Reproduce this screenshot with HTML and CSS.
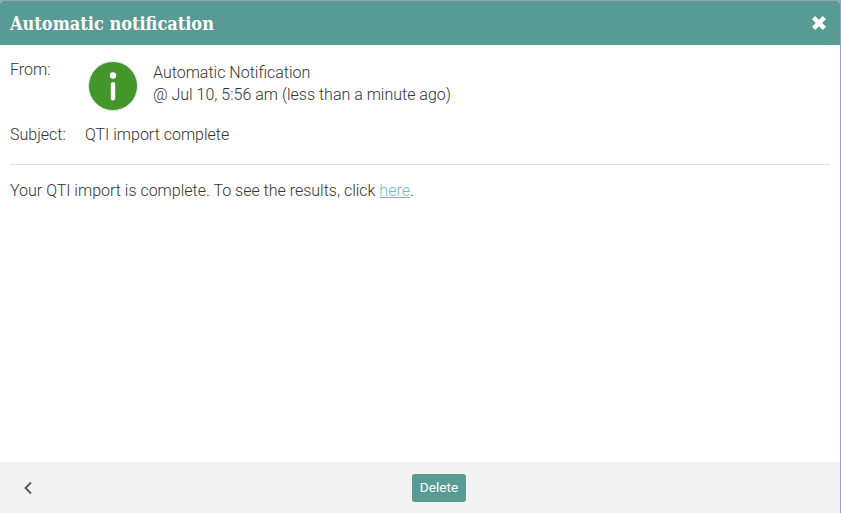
FILE: index.html
```html
<!DOCTYPE html>
<html lang="en">
<head>
<meta charset="utf-8">
<title>Automatic notification</title>
<link rel="stylesheet" href="styles.css">
</head>
<body>
<div class="dialog">
  <header class="head">
    <h1 class="title">Automatic notification</h1>
    <svg class="close" viewBox="0 0 16 16" width="16" height="16" aria-label="Close"><path d="M2.6 2.6 L13.4 13.4 M13.4 2.6 L2.6 13.4" stroke="#fff" stroke-width="4.4" stroke-linecap="butt" fill="none"/></svg>
  </header>
  <main class="content">
    <div class="from">
      <div class="label">From:</div>
      <svg class="avatar" viewBox="0 0 50 50" width="50" height="50"><circle cx="25" cy="25" r="24.5" fill="#43962a" stroke="#e4e8e2" stroke-width="1"/><circle cx="25" cy="14.5" r="3.2" fill="#fff"/><rect x="22.8" y="21" width="4.4" height="18.5" rx="2.2" fill="#fff"/></svg>
      <div class="sender">
        <div>Automatic Notification</div>
        <div>@ Jul 10, 5:56 am (less than a minute ago)</div>
      </div>
    </div>
    <div class="subject">
      <div class="subject-label">Subject:</div>
      <div>QTI import complete</div>
    </div>
    <hr class="rule">
    <p class="message">Your QTI import is complete. To see the results, click <a class="link" href="#">here</a>.</p>
  </main>
  <footer class="foot">
    <svg class="back" viewBox="0 0 10 14" width="10" height="14"><path d="M8 1.5 L2.5 7 L8 12.5" stroke="#555" stroke-width="1.8" fill="none"/></svg>
    <button class="delete" type="button">Delete</button>
  </footer>
</div>
</body>
</html>
```
FILE: styles.css
```css
* { box-sizing: border-box; }
html, body { height: 100%; }
body {
  margin: 0;
  background: #8ea3b5;
  padding: 1px 1px 0 0;
  overflow: hidden;
  font-family: Roboto, "Liberation Sans", sans-serif;
  font-weight: 300;
  font-size: 16px;
  color: #333;
}
.dialog {
  height: 512px;
  display: flex;
  flex-direction: column;
  background: #fff;
  border-radius: 4px 4px 0 0;
  overflow: hidden;
}
.head {
  height: 44px;
  flex: none;
  background: #589b94;
  display: flex;
  align-items: center;
  justify-content: space-between;
  padding: 0 13px 0 10px;
}
.title {
  margin: 1px 0 0;
  font-family: "DejaVu Serif", serif;
  font-stretch: condensed;
  font-weight: 700;
  font-size: 18px;
  color: #fff;
}
.close { display: block; }
.content { flex: 1; padding: 16px 10px 0; }
.from { display: flex; align-items: flex-start; }
.label { width: 78px; line-height: 18px; }
.avatar { display: block; flex: none; }
.sender { margin: 1px 0 0 15px; line-height: 22px; }
.subject { display: flex; margin-top: 15px; line-height: 18px; }
.subject-label { width: 75px; }
.rule { border: 0; border-top: 1px solid #e0e0e0; margin: 20px 0 0; }
.message { margin: 16px 0 0; line-height: 20px; }
.link { color: #5ec4ba; }
.foot {
  height: 51px;
  flex: none;
  background: #f3f3f3;
  display: flex;
  align-items: center;
  padding-left: 23px;
}
.back { display: block; flex: none; }
.delete {
  width: 54px;
  height: 28px;
  margin-left: 379px;
  padding: 0 0 1px;
  border: 0;
  border-radius: 3px;
  background: #589b94;
  color: #fff;
  font-family: Roboto, sans-serif;
  font-weight: 400;
  font-size: 13.7px;
}
```
